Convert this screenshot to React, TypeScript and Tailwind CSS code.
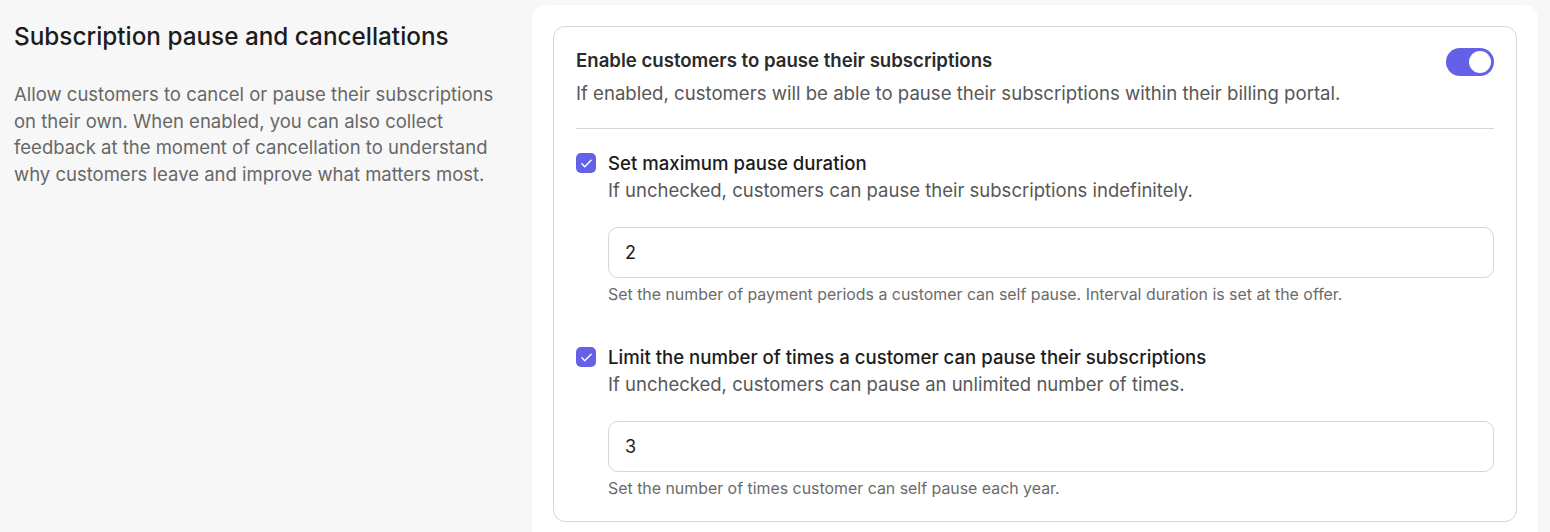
import React from "react";

function Check() {
  return (
    <div className="mt-[2px] flex h-[20px] w-[20px] shrink-0 items-center justify-center rounded-[5px] bg-[#6461e8]">
      <svg width="17" height="17" viewBox="0 0 24 24" fill="none" stroke="white" strokeWidth="2" strokeLinecap="round" strokeLinejoin="round">
        <path d="M5.5 12.5l4 4L18.5 7.5" />
      </svg>
    </div>
  );
}

function Option({ label, desc, value, helper, top }: { label: string; desc: string; value: string; helper: string; top: string }) {
  return (
    <div className={top}>
      <div className="flex items-start gap-[12px]">
        <Check />
        <div className="flex-1">
          <div className="text-[18.6px] leading-[24px] font-medium text-[#1c1c1c]">{label}</div>
        </div>
      </div>
      <div className="pl-[32px]">
        <div className="mt-[2px] text-[18.5px] leading-[26px] text-[#575757]">{desc}</div>
        <div className="mt-[24px] flex h-[51px] items-center rounded-[10px] border border-[#d6d6d6] bg-white px-[16px] text-[18px] text-[#1c1c1c]">
          {value}
        </div>
        <div className="mt-[7px] text-[15.9px] leading-[20px] text-[#6b6b6b]">{helper}</div>
      </div>
    </div>
  );
}

export default function App() {
  return (
    <div className="flex h-[532px] w-full overflow-hidden bg-[#f7f7f7] font-['Inter',sans-serif]">
      <div className="w-[532px] shrink-0 px-[14px] pt-[22px]">
        <h2 className="text-[24.3px] leading-[28px] font-medium text-[#1c1c1c]">Subscription pause and cancellations</h2>
        <p className="mt-[31px] pr-[20px] text-[18.5px] leading-[26.5px] text-[#676767]">
          Allow customers to cancel or pause their subscriptions on their own. When enabled, you can also collect feedback at the moment of cancellation to understand why customers leave and improve what matters most.
        </p>
      </div>
      <div className="mr-[12px] mt-[5px] h-[560px] flex-1 rounded-[14px] bg-white p-[21px]">
        <div className="rounded-[12px] border border-[#d6d6d6] px-[22px] pb-[22px] pt-[21px]">
          <div className="flex items-start justify-between">
            <div>
              <div className="text-[18.6px] leading-[24px] font-semibold text-[#2a2a2a]">Enable customers to pause their subscriptions</div>
              <div className="mt-[8px] text-[18.6px] leading-[26px] text-[#575757]">
                If enabled, customers will be able to pause their subscriptions within their billing portal.
              </div>
            </div>
            <div className="flex h-[28px] w-[48px] items-center justify-end rounded-full bg-[#6461e8] px-[3px]">
              <div className="h-[22px] w-[22px] rounded-full bg-white" />
            </div>
          </div>
          <div className="mt-[22px] h-px bg-[#d6d6d6]" />
          <Option
            top="mt-[22px]"
            label="Set maximum pause duration"
            desc="If unchecked, customers can pause their subscriptions indefinitely."
            value="2"
            helper="Set the number of payment periods a customer can self pause. Interval duration is set at the offer."
          />
          <Option
            top="mt-[40px]"
            label="Limit the number of times a customer can pause their subscriptions"
            desc="If unchecked, customers can pause an unlimited number of times."
            value="3"
            helper="Set the number of times customer can self pause each year."
          />
        </div>
      </div>
    </div>
  );
}
